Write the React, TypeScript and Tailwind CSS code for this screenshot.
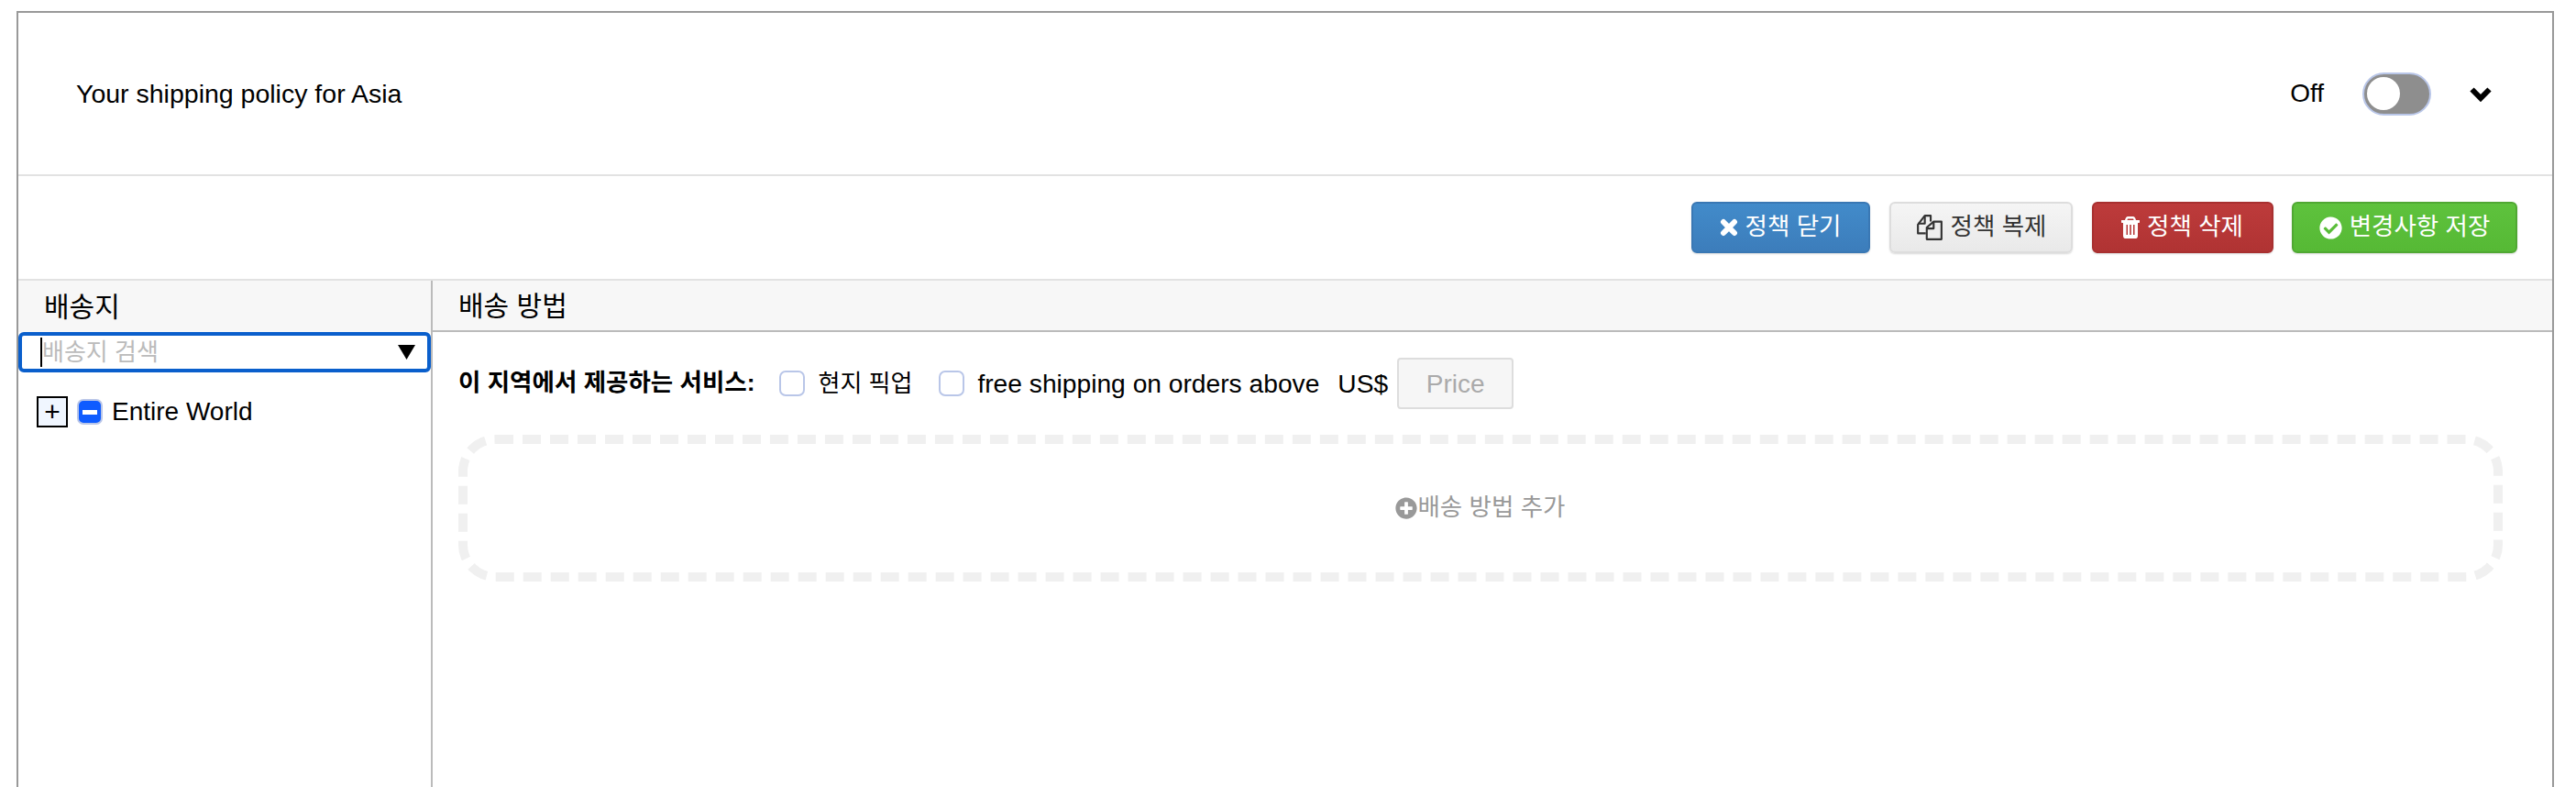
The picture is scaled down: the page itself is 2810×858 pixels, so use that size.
import { ReactNode } from "react";
import { FaCheckCircle, FaPlusCircle } from "react-icons/fa";

const CloseIcon = () => (
  <svg viewBox="0 0 20 20" className="w-[20px] h-[20px]">
    <path d="M4 4L16 16M16 4L4 16" stroke="currentColor" strokeWidth="6" strokeLinecap="round" fill="none" />
  </svg>
);

const CopyIcon = () => (
  <svg viewBox="0 0 28 28" className="w-[30px] h-[30px]" fill="none" stroke="currentColor" strokeWidth="2" strokeLinejoin="round">
    <path d="M10 20H2V11L9 2H15V8" />
    <path d="M9 2V10H2" />
    <path d="M11 26V14L18 8H26V26Z" fill="#eeeeee" />
    <path d="M18 8V15H11" />
  </svg>
);

const TrashIcon = () => (
  <svg viewBox="0 0 20 24" className="w-[20px] h-[24px]" fill="currentColor">
    <path
      fillRule="evenodd"
      d="M7 0H13C14 0 15 1 15.500 2.500L16 4H19.500C20 4 20 4.500 20 5V6C20 6.500 19.800 7 19.500 7H18V21C18 23 17 24 16 24H4C3 24 2 23 2 21V7H.500C.200 7 0 6.500 0 6V5C0 4.500 0 4 .500 4H4L4.500 2.500C5 1 6 0 7 0ZM7 2.400L6.400 4H13.600L13 2.400ZM5.500 9V20H7V9ZM9.200 9V20H10.800V9ZM13 9V20H14.500V9Z"
    />
  </svg>
);

type PolicyButtonProps = {
  icon: ReactNode;
  label: string;
  className: string;
};

const PolicyButton = ({ icon, label, className }: PolicyButtonProps) => (
  <button className={`h-[56px] flex items-center justify-center gap-[8px] border-2 rounded-[6px] text-[26.500px] shadow-[0_1px_2px_rgba(0,0,0,0.15)] ${className}`}>
    {icon}
    <span>{label}</span>
  </button>
);

export default function App() {
  return (
    <div className="h-[858px] overflow-hidden bg-white pt-[12px] pl-[18px] pr-[24px] text-black [font-family:'Liberation_Sans','Noto_Sans_CJK_KR',sans-serif]">
      <div className="h-[846px] flex flex-col border-2 border-b-0 border-[#999999]">
        {/* policy title */}
        <div className="h-[178px] shrink-0 flex items-center pl-[63px] pr-[65px] border-b-2 border-[#e2e2e2] text-[28px]">
          <span className="text-[28.500px]">Your shipping policy for Asia</span>
          <span className="ml-auto">Off</span>
          <div className="ml-[42px] w-[75px] h-[47px] p-[3px] rounded-full border-2 border-[#b9c6e8] bg-[#8e8e8e]">
            <div className="w-[36px] h-[36px] rounded-full bg-white"></div>
          </div>
          <svg viewBox="0 0 26 17" className="ml-[41px] w-[26px] h-[17px]">
            <path d="M3.500 3.500L13 13L22.500 3.500" stroke="#000000" strokeWidth="6" fill="none" />
          </svg>
        </div>

        {/* actions */}
        <div className="h-[114px] shrink-0 flex justify-end gap-[20.500px] pt-[28px] pr-[38px] border-b-2 border-[#e2e2e2]">
          <PolicyButton
            icon={<CloseIcon />}
            label="정책 닫기"
            className="w-[195px] mr-[1px] text-white border-[#3a78b4] bg-gradient-to-b from-[#428bca] to-[#3c7dbb]"
          />
          <PolicyButton
            icon={<CopyIcon />}
            label="정책 복제"
            className="w-[200px] text-[#333333] border-[#dddddd] bg-gradient-to-b from-[#f5f5f5] to-[#e9e9e9]"
          />
          <PolicyButton
            icon={<TrashIcon />}
            label="정책 삭제"
            className="w-[198px] text-white border-[#a83030] bg-gradient-to-b from-[#bd3b3b] to-[#b03333]"
          />
          <PolicyButton
            icon={<FaCheckCircle className="w-[25px] h-[25px]" />}
            label="변경사항 저장"
            className="w-[246px] text-white border-[#50a833] bg-gradient-to-b from-[#5ec23d] to-[#56b935]"
          />
        </div>

        <div className="flex-1 flex">
          {/* destinations */}
          <div className="w-[452px] shrink-0 border-r-2 border-[#bbbbbb]">
            <div className="h-[56px] flex items-center pl-[28px] bg-[#f7f7f7] text-[30px]">배송지</div>
            <div className="h-[44px] flex items-center pl-[20px] pr-[13px] border-[4px] border-[#0a5fcc] rounded-[6px] text-[26px] text-[#bbbbbb]">
              <span className="w-[2px] h-[32px] bg-black"></span>
              <span>배송지 검색</span>
              <svg viewBox="0 0 19 16" className="ml-auto w-[19px] h-[16px]">
                <path d="M0 0H19L9.500 16Z" fill="#000000" />
              </svg>
            </div>
            <div className="mt-[26px] ml-[20px] flex items-center">
              <div className="w-[34px] h-[34px] flex items-center justify-center border-2 border-black bg-[#f0f6ff] text-[30px] leading-none">+</div>
              <div className="ml-[10px] w-[28px] h-[28px] flex items-center justify-center rounded-[7px] border-2 border-[#b9c6e8] bg-[#0f5cff]">
                <span className="w-[16px] h-[5px] bg-white"></span>
              </div>
              <span className="ml-[10px] text-[28px] leading-[34px]">Entire World</span>
            </div>
          </div>

          {/* methods */}
          <div className="flex-1 min-w-0">
            <div className="h-[56px] flex items-center pl-[28px] bg-[#f7f7f7] border-b-2 border-[#bbbbbb] text-[30px]">배송 방법</div>
            <div className="flex items-center mt-[28px] pl-[28px] text-[28.200px]">
              <span className="font-bold text-[26.500px]">이 지역에서 제공하는 서비스:</span>
              <span className="ml-[27px] w-[28px] h-[28px] rounded-[7px] border-2 border-[#b9c6e8]"></span>
              <span className="ml-[14px] text-[26px]">현지 픽업</span>
              <span className="ml-[29px] w-[28px] h-[28px] rounded-[7px] border-2 border-[#b9c6e8]"></span>
              <span className="ml-[14px]">free shipping on orders above</span>
              <span className="ml-[20px]">US$</span>
              <div className="ml-[10px] w-[127px] h-[56px] pt-[2px] flex items-center justify-center rounded-[4px] border-2 border-[#dddddd] bg-[#f6f6f6] text-[#aaaaaa] text-[28px]">Price</div>
            </div>
            <div className="mt-[28px] ml-[28px] mr-[54px] h-[160px] flex items-center justify-center rounded-[40px] border-[10px] border-dashed border-[#f0f0f0] text-[26.500px] text-[#999999]">
              <FaPlusCircle className="w-[24px] h-[24px]" />
              <span>배송 방법 추가</span>
            </div>
          </div>
        </div>
      </div>
    </div>
  );
}
